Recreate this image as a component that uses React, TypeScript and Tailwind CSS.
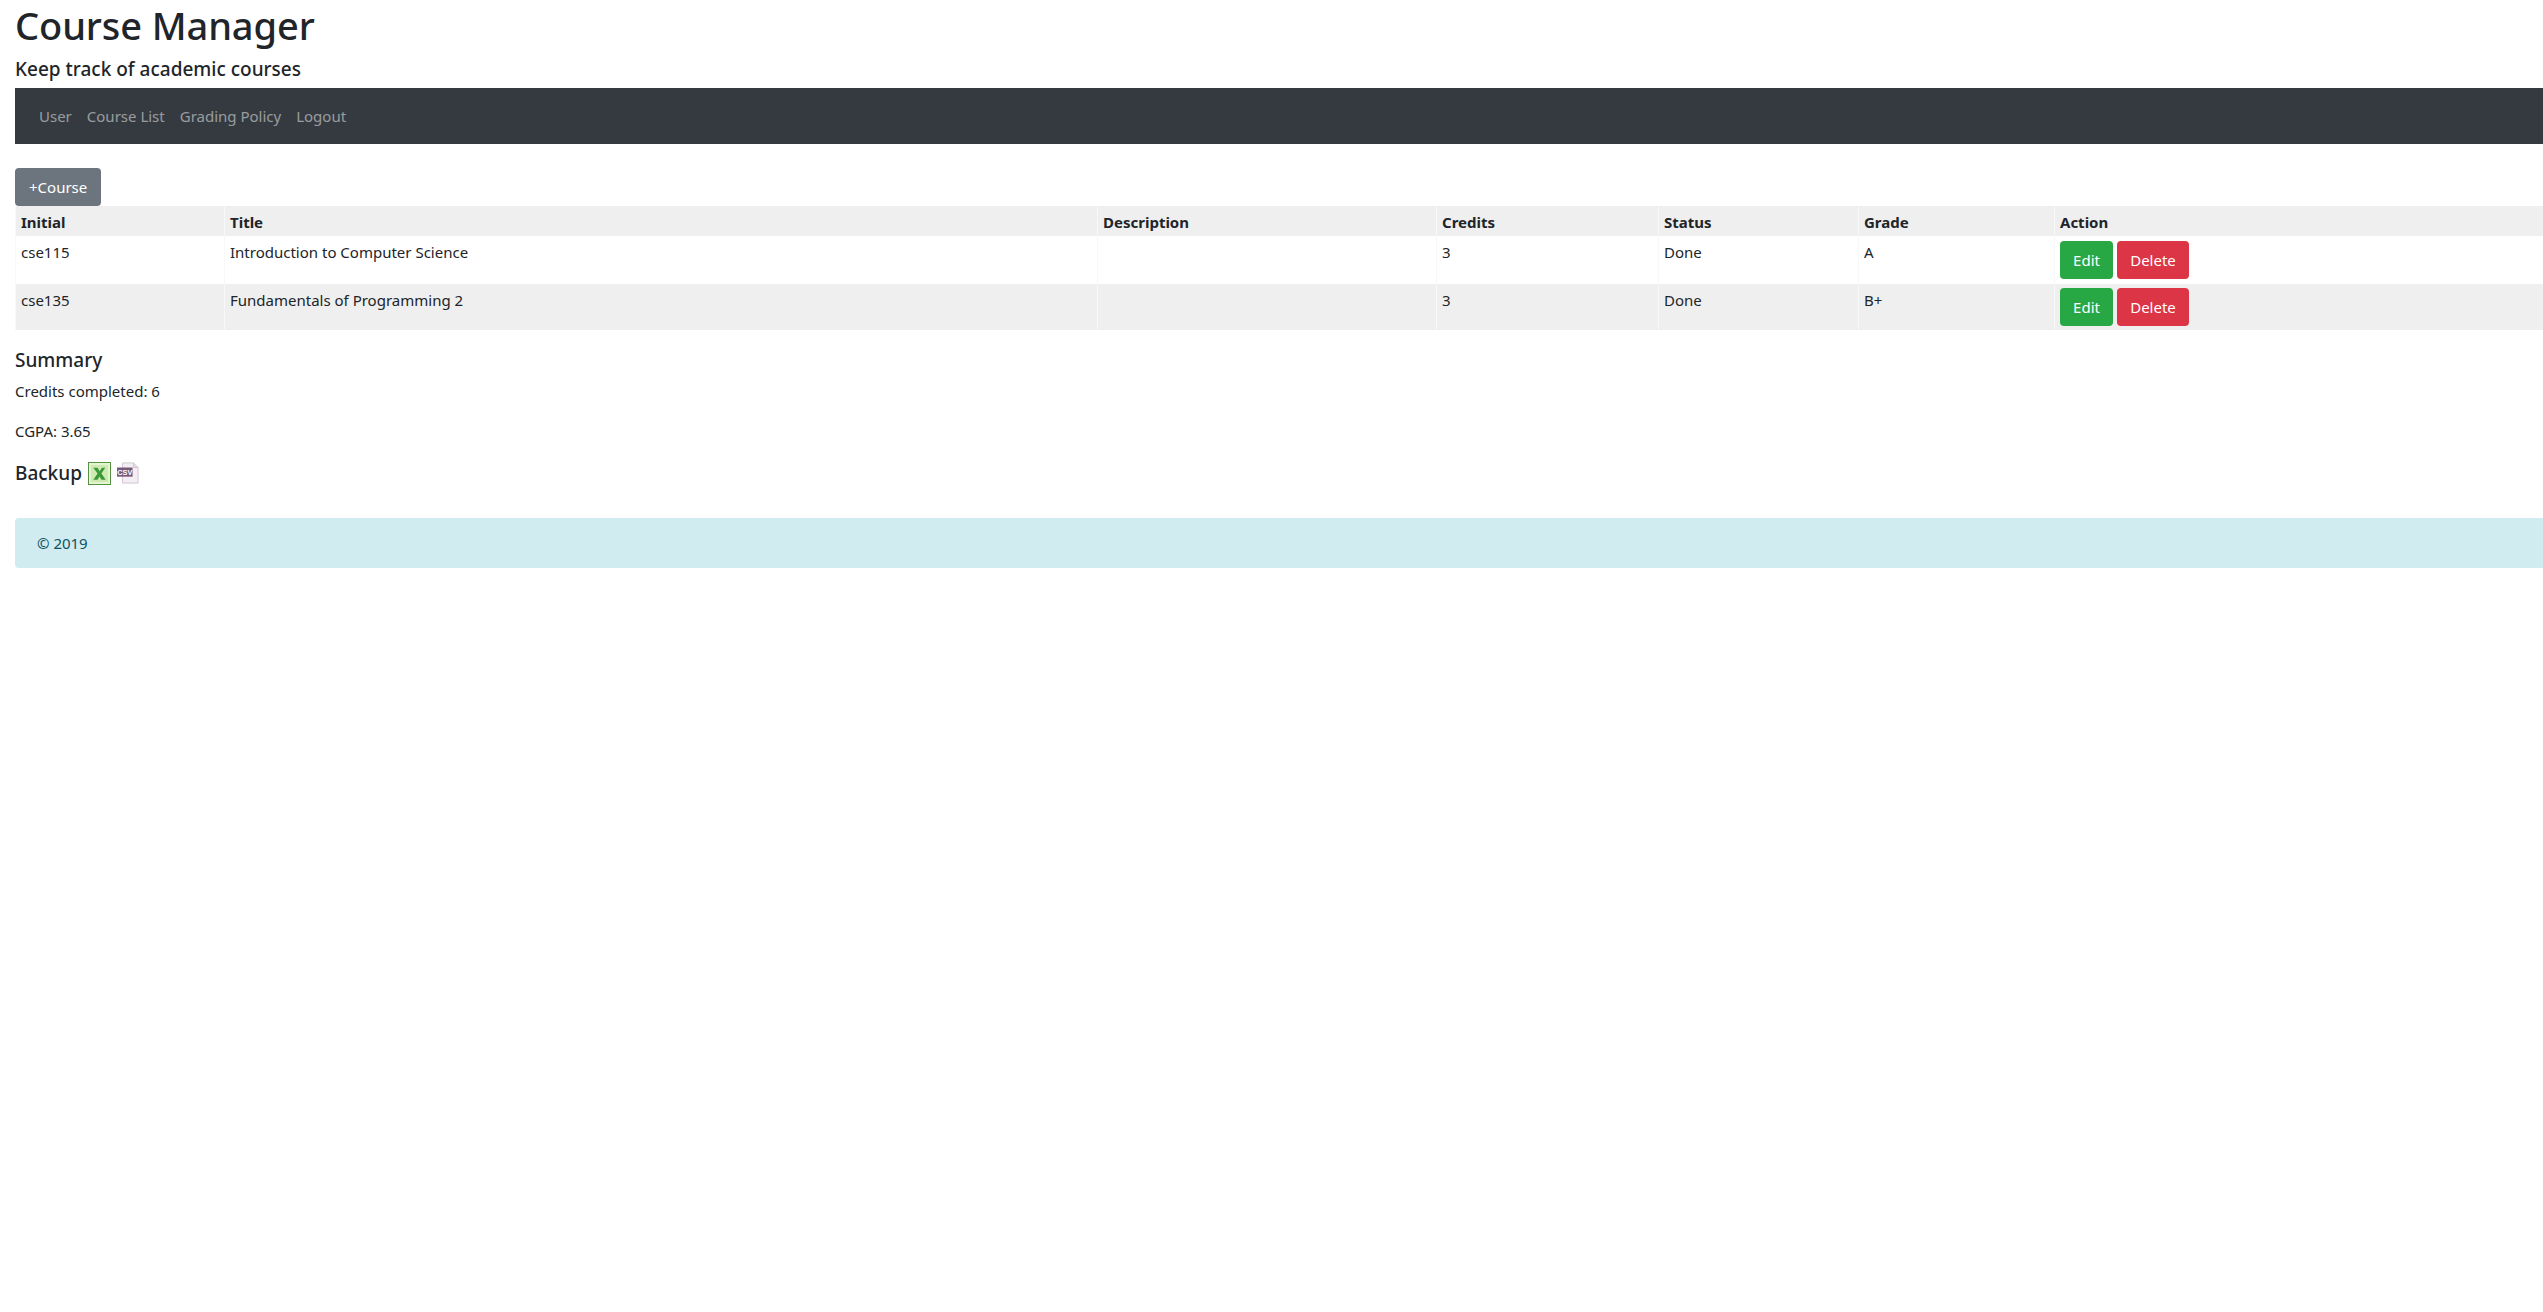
const rows = [
  { initial: "cse115", title: "Introduction to Computer Science", credits: "3", status: "Done", grade: "A" },
  { initial: "cse135", title: "Fundamentals of Programming 2", credits: "3", status: "Done", grade: "B+" },
];

const headers = ["Initial", "Title", "Description", "Credits", "Status", "Grade", "Action"];

function ExcelIcon() {
  return (
    <svg width="23" height="23" viewBox="0 0 24 24" className="shrink-0">
      <rect x="0.5" y="0.5" width="23" height="23" fill="#e6f5d5" stroke="#4f8f3a" />
      <rect x="3" y="3" width="18" height="18" fill="#cfeab0" />
      <path d="M5.5 6h4.5l2.2 3.6L14.5 6H18l-4 6 4.5 6.5H14l-2-3.4-2 3.4H5.5L10 12z" fill="#3a9a3a" />
    </svg>
  );
}

function CsvIcon() {
  return (
    <svg width="22" height="22" viewBox="0 0 24 24" className="shrink-0">
      <path d="M6 1h12l5 5v17H6z" fill="#f3eef3" stroke="#cfc3cf" />
      <path d="M18 1v5h5" fill="#e2d8e2" stroke="#cfc3cf" />
      <rect x="0" y="6" width="17" height="10" fill="#77597a" />
      <text x="8.5" y="14.2" textAnchor="middle" fontSize="8" fontWeight="700" fill="#ffffff" fontFamily="Liberation Sans, sans-serif">CSV</text>
    </svg>
  );
}

export default function App() {
  return (
    <div className="min-h-[1312px] bg-white pl-[15px] font-['Noto_Sans',sans-serif] text-[15px] text-[#212529]">
      <h1 className="h-[50px] text-[38px] leading-[50px] font-medium tracking-[-0.1px]">Course Manager</h1>
      <h5 className="mt-[4px] h-[34px] text-[19px] leading-[30px] font-medium">Keep track of academic courses</h5>

      <nav className="flex h-[56px] items-center gap-[15px] bg-[#343a40] pl-[24px] text-[rgba(255,255,255,0.5)]">
        <span>User</span>
        <span>Course List</span>
        <span>Grading Policy</span>
        <span>Logout</span>
      </nav>

      <button className="mt-[24px] block h-[38px] rounded-[4px] bg-[#6c757d] px-[14px] text-white">+Course</button>

      <table className="w-full table-fixed border-collapse">
        <colgroup>
          <col className="w-[209px]" />
          <col className="w-[873px]" />
          <col className="w-[339px]" />
          <col className="w-[222px]" />
          <col className="w-[200px]" />
          <col className="w-[196px]" />
          <col />
        </colgroup>
        <thead>
          <tr className="h-[30px] bg-[#efefef]">
            {headers.map((h) => (
              <th key={h} className="border-l border-[#f8f8f8] px-[5px] pt-[2px] pb-0 text-left font-bold">{h}</th>
            ))}
          </tr>
        </thead>
        <tbody>
          {rows.map((row, i) => (
            <tr key={row.initial} className={i % 2 === 1 ? "bg-[#efefef]" : ""}>
              <td className="border-l border-[#f8f8f8] px-[5px] pt-[5px] align-top">{row.initial}</td>
              <td className="border-l border-[#f8f8f8] px-[5px] pt-[5px] align-top">{row.title}</td>
              <td className="border-l border-[#f8f8f8] px-[5px] pt-[5px] align-top"></td>
              <td className="border-l border-[#f8f8f8] px-[5px] pt-[5px] align-top">{row.credits}</td>
              <td className="border-l border-[#f8f8f8] px-[5px] pt-[5px] align-top">{row.status}</td>
              <td className="border-l border-[#f8f8f8] px-[5px] pt-[5px] align-top">{row.grade}</td>
              <td className={`border-l border-[#f8f8f8] px-[5px] align-top ${i === 0 ? "pt-[5px] pb-[5px]" : "pt-[4px] pb-[4px]"}`}>
                <div className="flex gap-[4px]">
                  <button className="h-[38px] w-[53px] rounded-[4px] bg-[#28a745] text-white">Edit</button>
                  <button className="h-[38px] w-[72px] rounded-[4px] bg-[#dc3545] text-white">Delete</button>
                </div>
              </td>
            </tr>
          ))}
        </tbody>
      </table>

      <h5 className="mt-[15px] text-[19px] leading-[30px] font-medium">Summary</h5>
      <p className="mt-[4px] leading-[24px]">Credits completed: 6</p>
      <p className="mt-[16px] leading-[24px]">CGPA: 3.65</p>
      <div className="mt-[15px] flex items-center gap-[6px]">
        <h5 className="text-[19px] leading-[30px] font-medium">Backup</h5>
        <ExcelIcon />
        <CsvIcon />
      </div>

      <div className="mt-[30px] flex h-[50px] items-center rounded-l-[4px] bg-[#d1ecf1] pl-[22px] text-[#0c5460]">© 2019</div>
    </div>
  );
}
